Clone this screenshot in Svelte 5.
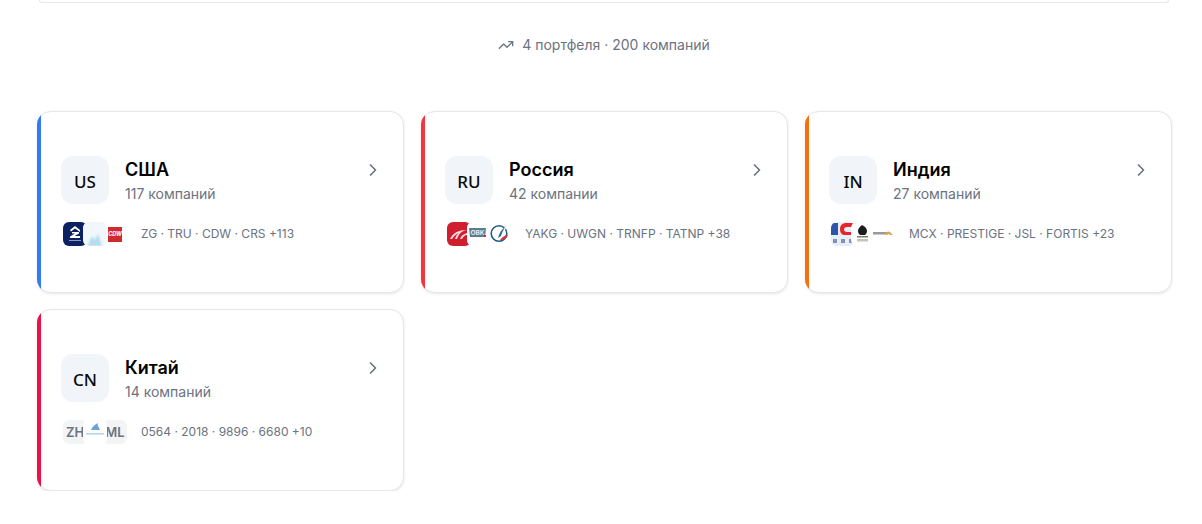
<script lang="ts">
  const portfolios = [
    { code: 'US', name: 'США', count: '117 компаний', tickers: 'ZG · TRU · CDW · CRS +113', accent: '#2f7cf6', logos: ['zillow', 'tru', 'cdw'] },
    { code: 'RU', name: 'Россия', count: '42 компании', tickers: 'YAKG · UWGN · TRNFP · TATNP +38', accent: '#f8333c', logos: ['yakg', 'uwgn', 'trnfp'] },
    { code: 'IN', name: 'Индия', count: '27 компаний', tickers: 'MCX · PRESTIGE · JSL · FORTIS +23', accent: '#f96f0b', logos: ['mcx', 'prestige', 'jsl'] },
    { code: 'CN', name: 'Китай', count: '14 компаний', tickers: '0564 · 2018 · 9896 · 6680 +10', accent: '#ee0f47', logos: ['zh', 'aac', 'ml'] }
  ];
</script>

<div class="page">
  <div class="top-card"></div>

  <div class="summary">
    <svg width="16" height="16" viewBox="0 0 24 24" fill="none" stroke="#6b7280" stroke-width="2" stroke-linecap="round" stroke-linejoin="round">
      <path d="M22 7l-8.500 8.500-5-5L2 17" />
      <path d="M16 7h6v6" />
    </svg>
    <span>4 портфеля · 200 компаний</span>
  </div>

  <div class="grid">
    {#each portfolios as p}
      <div class="card">
        <div class="accent" style="background: {p.accent}"></div>
        <div class="head">
          <div class="code">{p.code}</div>
          <div class="title">
            <div class="name">{p.name}</div>
            <div class="count">{p.count}</div>
          </div>
          <svg class="chevron" width="20" height="20" viewBox="0 0 24 24" fill="none" stroke="#6b7280" stroke-width="2" stroke-linecap="round" stroke-linejoin="round">
            <path d="M9 18l6-6-6-6" />
          </svg>
        </div>
        <div class="foot">
          <div class="logos">
            {#each p.logos as logo}
              <div class="logo">
                {#if logo === 'zillow'}
                  <svg viewBox="0 0 24 24">
                    <rect width="24" height="24" fill="#0b2161" />
                    <path d="M7 8l5-4 5 4v2l-5-3.500-4 3z" fill="#fff" />
                    <path d="M9 10h7v1.500L11.500 14H17v2H7v-1.500l5-3H9z" fill="#fff" />
                    <rect x="6" y="18" width="12" height="1" fill="#8c9abd" />
                  </svg>
                {:else if logo === 'tru'}
                  <svg class="soft" viewBox="0 0 24 24">
                    <rect width="24" height="24" fill="#f1f7fa" />
                    <path d="M5 24c1-5 3-7 4-10 1 2 2 3 3 4 1-2 2-4 3-6 1 3 2 6 4 12z" fill="#b3dcef" />
                  </svg>
                {:else if logo === 'cdw'}
                  <svg viewBox="0 0 24 24">
                    <rect width="24" height="24" fill="#fff" />
                    <rect x="5" y="5" width="14" height="15" fill="#cf2a2e" />
                    <text x="12" y="14" text-anchor="middle" font-size="5.500" font-weight="800" font-style="italic" fill="#fbeaea">CDW</text>
                  </svg>
                {:else if logo === 'yakg'}
                  <svg viewBox="0 0 24 24">
                    <rect width="24" height="24" fill="#cf1f2e" />
                    <path d="M3 17c3-6 8-9 17-9-6 1-8 4-10 9H8c1-3 2-5 4-6-3 1-5 3-7 6z" fill="#f7d9dc" />
                    <path d="M13 17c1-3 3-5 7-6v2c-2 0-4 2-5 4z" fill="#f7d9dc" />
                  </svg>
                {:else if logo === 'uwgn'}
                  <svg viewBox="0 0 24 24">
                    <rect width="24" height="24" fill="#fff" />
                    <path d="M2 6h17l-1 9H3z" fill="#5c7c90" />
                    <text x="10.500" y="13" text-anchor="middle" font-size="6.500" font-weight="700" fill="#e6edf1">OBK</text>
                    <rect x="17" y="13" width="2" height="2" fill="#d3303a" />
                  </svg>
                {:else if logo === 'trnfp'}
                  <svg viewBox="0 0 24 24">
                    <rect width="24" height="24" fill="#fff" />
                    <circle cx="12" cy="11.500" r="7.800" fill="none" stroke="#1f5a8c" stroke-width="1.600" />
                    <path d="M9 18c1-6 5-11 12-15-3 4-5 8-6 12z" fill="#fff" />
                    <path d="M11 16c1-5 4-9 8-12-3 4-4 7-5 10z" fill="#2f6b9e" />
                    <path d="M13 18c2-3 5-5 8-5-1 3-4 5-8 5z" fill="#d8343c" />
                  </svg>
                {:else if logo === 'mcx'}
                  <svg class="soft-s" viewBox="0 0 24 24">
                    <rect width="24" height="24" fill="#e9eef6" />
                    <rect x="0" y="1" width="7" height="12" fill="#2a57a8" />
                    <path d="M9 7c0-4 3-6 6-6h7v4h-6c-2 0-3 1-3 2.500S14 10 16 10h6v3h-8c-3 0-5-2-5-6z" fill="#e8252c" />
                    <rect x="2" y="17" width="4" height="4" fill="#7d93b8" />
                    <rect x="10" y="17" width="4" height="4" fill="#7d93b8" />
                    <rect x="18" y="17" width="4" height="4" fill="#7d93b8" />
                  </svg>
                {:else if logo === 'prestige'}
                  <svg class="soft-s" viewBox="0 0 24 24">
                    <rect width="24" height="24" fill="#fff" />
                    <path d="M11 3c2 1 5 3 5 6 0 2-1 3-2 4H9c-1-1-2-2-2-4 0-3 2-4 4-6z" fill="#1c1c1c" />
                    <rect x="6" y="14" width="11" height="1.500" fill="#7d7d68" />
                    <rect x="6" y="17" width="11" height="2.500" fill="#c4c4ba" />
                  </svg>
                {:else if logo === 'jsl'}
                  <svg class="soft-s" viewBox="0 0 24 24">
                    <rect width="24" height="24" fill="#fff" />
                    <rect x="2" y="10" width="14" height="2.500" fill="#999" />
                    <path d="M14 12c1-3 4-3 5-2l3 3h-3l-1-1-2 1z" fill="#dca64c" />
                  </svg>
                {:else if logo === 'aac'}
                  <svg class="soft-s" viewBox="0 0 24 24">
                    <rect width="24" height="24" fill="#fff" />
                    <path d="M8 10c1-3 3-5 7-7-1 3 1 4 2 7z" fill="#6aa3d6" />
                    <rect x="3" y="13" width="18" height="1.500" fill="#b5d2e8" />
                  </svg>
                {:else}
                  <span>{logo.toUpperCase()}</span>
                {/if}
              </div>
            {/each}
          </div>
          <div class="tickers">{p.tickers}</div>
        </div>
      </div>
    {/each}
  </div>
</div>

<style>
  :global(body) {
    background: #fff;
    font-family: Inter, 'Liberation Sans', sans-serif;
  }

  .page {
    padding: 0 31px 0 37px;
  }

  .top-card {
    height: 3px;
    margin: 0 2px;
    background: #fff;
    border: 1px solid #e5e7eb;
    border-top: none;
    border-radius: 0 0 12px 12px;
    box-sizing: border-box;
  }

  .summary {
    display: flex;
    align-items: center;
    justify-content: center;
    gap: 8px;
    margin-top: 32px;
    height: 20px;
    font-size: 14px;
    line-height: 20px;
    color: #6b7280;
  }

  .grid {
    display: grid;
    grid-template-columns: repeat(3, 367px);
    column-gap: 17px;
    row-gap: 16px;
    margin-top: 56px;
  }

  .card {
    position: relative;
    box-sizing: border-box;
    height: 182px;
    padding: 44px 20px 0 23px;
    background: #fff;
    border: 1px solid #e5e7eb;
    border-radius: 14px;
    box-shadow: 0 1px 3px rgba(0, 0, 0, 0.1);
    overflow: clip;
    overflow-clip-margin: 1px;
  }

  .accent {
    position: absolute;
    left: -1px;
    top: -1px;
    bottom: -1px;
    width: 4px;
  }

  .head {
    display: flex;
    align-items: flex-start;
    gap: 16px;
  }

  .code {
    display: flex;
    align-items: center;
    justify-content: center;
    flex: none;
    width: 48px;
    height: 48px;
    padding-top: 3px;
    box-sizing: border-box;
    border-radius: 12px;
    background: #f1f5f9;
    font-family: 'Noto Sans', sans-serif;
    font-size: 17px;
    font-weight: 500;
    color: #0a0a0a;
  }

  .title {
    flex: 1;
  }

  .name {
    font-size: 18px;
    line-height: 28px;
    font-weight: 600;
    color: #000;
  }

  .count {
    font-size: 14px;
    line-height: 20px;
    color: #6b7280;
  }

  .chevron {
    flex: none;
    margin-top: 4px;
  }

  .foot {
    display: flex;
    align-items: center;
    gap: 14px;
    margin-top: 18px;
    padding-left: 2px;
  }

  .logos {
    display: flex;
  }

  .logo {
    flex: none;
    width: 24px;
    height: 24px;
    margin-left: -4px;
    border-radius: 6px;
    overflow: hidden;
    background: #f3f4f6;
    display: flex;
    align-items: center;
    justify-content: center;
    font-size: 13px;
    font-weight: 600;
    color: #6b7280;
  }

  .logo:first-child {
    margin-left: 0;
  }

  .logo svg {
    display: block;
    width: 24px;
    height: 24px;
    font-family: Inter, sans-serif;
  }

  .logo svg.soft {
    filter: blur(1px);
  }

  .logo svg.soft-s {
    filter: blur(0.4px);
  }

  .tickers {
    font-size: 12px;
    line-height: 16px;
    color: #6b7280;
  }
</style>
